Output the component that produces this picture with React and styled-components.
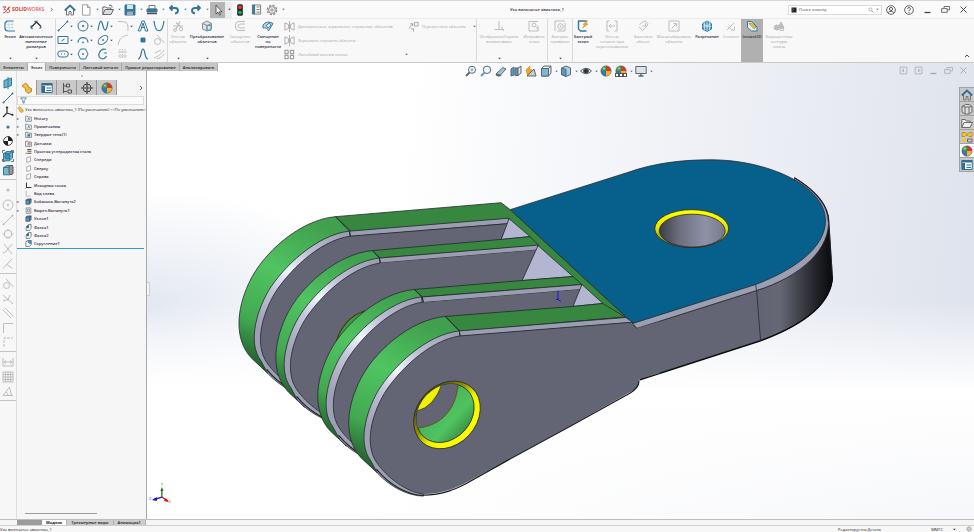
import React, {useState} from 'react';
import styled, {createGlobalStyle} from 'styled-components';

const Global = createGlobalStyle`
  * {
    box-sizing: border-box;
  }

  body {
    margin: 0;
    font-family: "Open Sans", "Noto Sans", sans-serif;
    font-size: 4px;
    line-height: 5px;
    color: #222;
    background: #f7f7f7;
  }

  button, input {
    font: inherit;
    color: inherit;
    border: 0;
    padding: 0;
    margin: 0;
    background: none;
  }

  svg {
    display: block;
    flex: none;
  }
`;

const Page = styled.div`
  height: 100vh;
  display: flex;
  flex-direction: column;
  overflow: hidden;
`;

const TitleBar = styled.header`
  height: 18px;
  flex: none;
  display: flex;
  align-items: center;
  border-top: 1px solid #d6d6d6;
  background: #fafafa;
`;

const Brand = styled.div`
  width: 62px;
  display: flex;
  align-items: center;
  padding-left: 2px;
  color: #d8322f;
  font-size: 5px;
  font-weight: 400;

  svg:first-child {
    margin-right: 1px;
  }

  b {
    font-weight: 700;
  }

  svg:last-child {
    margin-left: 5px;
    color: #444;
  }
`;

const Quick = styled.div`
  display: flex;
  align-items: center;
`;

const QuickButton = styled.button`
  height: 16px;
  width: ${(p) => (p.$wide ? 22 : 16)}px;
  display: flex;
  align-items: center;
  justify-content: ${(p) => (p.$wide ? 'space-between' : 'center')};
  padding: ${(p) => (p.$wide ? '0 1px 0 2px' : 0)};
  color: #33789b;
`;

const CursorButton = styled(QuickButton)`
  background: linear-gradient(90deg, #b5b5b5 15px, #ececec 15px);
  color: #333;
`;

const DocTitle = styled.h1`
  flex: 1;
  margin: 0;
  text-align: center;
  font-size: 4px;
  font-weight: 600;
  color: #3a2640;
`;

const Search = styled.label`
  width: 94px;
  height: 10px;
  display: flex;
  align-items: center;
  gap: 2px;
  padding: 0 2px;
  border: 1px solid #dcdcdc;
  background: #fff;
  color: #777;

  input {
    flex: 1;
    min-width: 0;
    outline: 0;
  }

  input::placeholder {
    color: #554050;
    opacity: 1;
  }
`;

const WindowButtons = styled.div`
  display: flex;
  padding-right: 2px;
  color: #444;

  button {
    width: 18px;
    display: flex;
    justify-content: center;
  }
`;

const Ribbon = styled.div`
  height: 45px;
  flex: none;
  display: flex;
  background: #f8f8f8;
  border-top: 1px solid #ececec;
  border-bottom: 1px solid #c9c9c9;
`;

const Group = styled.div`
  display: flex;
  padding-right: ${(p) => p.$end || 0}px;
  border-right: 1px solid ${(p) => (p.$last ? 'transparent' : '#d9d9d9')};
`;

const Tool = styled.button`
  width: ${(p) => p.$width}px;
  display: flex;
  flex-direction: column;
  align-items: center;
  padding: 1px 0 2px;
  white-space: pre;
  text-align: center;
  font-weight: ${(p) => (p.$off ? 400 : 600)};
  color: ${(p) => (p.$off ? '#a2a2a2' : '#2c2c3a')};
  background: ${(p) => (p.$active ? '#b0b0b0' : 'none')};

  & > svg:first-child {
    margin-bottom: 2px;
    color: ${(p) => (p.$off ? '#bdbdbd' : '#33789b')};
  }

  & > svg:nth-of-type(2) {
    margin-top: auto;
    color: #333;
  }
`;

const SketchTools = styled.div`
  display: grid;
  grid-template-columns: repeat(4, 20px) 16px 14px;
  grid-template-rows: repeat(3, 14px);
  padding: 0 0 0 1px;
`;

const SketchTool = styled.button`
  display: flex;
  align-items: center;
  gap: 1px;
  color: ${(p) => (p.$off ? '#bdbdbd' : '#33789b')};

  svg:nth-of-type(2) {
    color: #444;
  }
`;

const WideTools = styled.div`
  width: 194px;
  display: grid;
  grid-template-columns: 124px 1fr;
  grid-template-rows: repeat(3, 14px);
  padding: 0 0 0 2px;
`;

const WideTool = styled.button`
  display: flex;
  align-items: center;
  gap: 3px;
  white-space: nowrap;
  color: #a2a2a2;

  svg:nth-of-type(2) {
    margin-left: auto;
    color: #555;
  }
`;

const Collapse = styled.button`
  margin: auto 4px 3px auto;
`;

const Body = styled.main`
  flex: 1;
  min-height: 0;
  display: grid;
  grid-template-columns: 17px 129px 1fr;
  grid-template-rows: 8px 1fr;
`;

const CommandTabs = styled.nav`
  grid-area: 1 / 1 / 2 / 4;
  justify-self: start;
  z-index: 2;
  display: flex;
`;

const CommandTab = styled.button`
  height: 8px;
  padding: 0 3px;
  border-right: 1px solid #aaa;
  font-weight: 600;
  background: ${(p) => (p.$active ? '#f8f8f8' : '#c6c6c6')};
`;

const Rail = styled.aside`
  grid-area: 2 / 1;
  padding-top: 6px;
  background: #f7f7f7;
  border-right: 1px solid #dedede;
`;

const RailSection = styled.div`
  height: ${(p) => p.$height}px;
  margin-bottom: 3px;
  display: flex;
  flex-direction: column;
  align-items: center;
  justify-content: space-between;
  color: ${(p) => (p.$off ? '#bdbdbd' : '#33789b')};

  button {
    display: block;
  }
`;

const RailLine = styled.hr`
  height: 1px;
  margin: 0 0 4px;
  border: 0;
  background: #c4c4c4;
`;

const Panel = styled.section`
  grid-area: 2 / 2;
  min-width: 0;
  display: flex;
  flex-direction: column;
  background: #f6f6f6;
`;

const Grip = styled.div`
  height: 9px;
  display: flex;
  align-items: center;
  justify-content: center;
  color: #888;
`;

const PanelTabs = styled.div`
  height: 15px;
  display: flex;
  align-items: center;

  & > svg {
    margin: 0 2px 0 auto;
    color: #333;
  }
`;

const PanelTab = styled.button`
  width: 20px;
  height: 15px;
  display: flex;
  align-items: center;
  justify-content: center;
  border-right: 1px solid #999;
  background: ${(p) => (p.$active ? '#f6f6f6' : '#c9c9c9')};
  color: #444;
`;

const Filter = styled.label`
  height: 9px;
  margin: 1px 2px 0 0;
  display: flex;
  align-items: center;
  padding-left: 2px;
  border: 1px solid #dcdcdc;
  background: #fbfbfb;
  color: #2f6f92;

  input {
    flex: 1;
    min-width: 0;
    outline: 0;
  }
`;

const Root = styled.div`
  height: 9px;
  display: flex;
  align-items: center;
  gap: 1px;
  white-space: nowrap;
  overflow: hidden;
  color: #111;
`;

const Tree = styled.ul`
  height: 135px;
  margin: 0 2px 0 0;
  padding: 0;
  display: flex;
  flex-direction: column;
  justify-content: space-between;
  list-style: none;
  border-bottom: 1px solid #3f94c8;
`;

const Node = styled.li`
  height: 8px;
  display: flex;
  align-items: center;
  gap: 2px;
  font-weight: 600;
  color: #3a2a44;

  &::before {
    content: "${(p) => (p.$branch ? '▸' : '')}";
    width: 6px;
    color: #777;
  }
`;

const ScrollThumb = styled.div`
  width: 72px;
  height: 1px;
  margin: auto 0 5px 8px;
  background: #9c9c9c;
`;

const Viewport = styled.section`
  grid-area: 1 / 3 / 3 / 4;
  position: relative;
  overflow: hidden;
  border-left: 1px solid #a9a9a9;
  background:
    linear-gradient(180deg, rgba(255, 255, 255, 0) 52%, #fff 72%, rgba(255, 255, 255, .75) 100%),
    radial-gradient(ellipse 230px 120px at 0 54%, #e2e7f0, rgba(226, 231, 240, 0)),
    linear-gradient(97deg, #fff 30%, #dfe3ed 96%);
`;

const Model = styled.svg`
  position: absolute;
  inset: 0;
  width: 100%;
  height: 100%;
`;

const ViewTools = styled.div`
  position: absolute;
  top: 2px;
  left: 0;
  right: 0;
  display: flex;
  justify-content: center;
  padding-right: 4px;
  color: #5c6670;

  button {
    width: 15px;
    height: 12px;
    display: flex;
    align-items: center;
    justify-content: center;
  }

  button.menu {
    width: 20px;
    gap: 3px;
  }
`;

const DocButtons = styled.div`
  position: absolute;
  top: 3px;
  right: 3px;
  display: flex;
  color: #a5a8af;

  button {
    width: 15px;
    display: flex;
    justify-content: center;
  }
`;

const TaskPane = styled.div`
  position: absolute;
  top: 24px;
  right: 0;
  border: 1px solid #a2a2a2;
  border-right: 0;
`;

const TaskTab = styled.button`
  width: 14px;
  height: 14px;
  display: flex;
  align-items: center;
  justify-content: center;
  border-bottom: 1px solid #a2a2a2;
  background: ${(p) => (p.$active ? '#fff' : '#c8c8c8')};
  color: ${(p) => (p.$blue ? '#2f6f92' : '#6a6a6a')};

  &:last-child {
    height: 13px;
    border-bottom: 0;
  }
`;

const Handle = styled.button`
  position: absolute;
  left: 0;
  top: 48%;
  width: 3px;
  height: 14px;
  background: #f6f6f6;
  border: 1px solid #cfcfcf;
  border-left: 0;
`;

const SheetTabs = styled.nav`
  height: 6px;
  flex: none;
  display: flex;
  padding-left: 17px;
  border-top: 1px solid #bdbdbd;
  background: #f5f5f5;
`;

const SheetTab = styled.button`
  padding: 0 4px;
  border-right: 1px solid #b3b3b3;
  font-weight: ${(p) => (p.$active ? 700 : 600)};
  background: ${(p) => (p.$active ? '#fff' : '#cdcdcd')};
`;

const SheetArrows = styled.div`
  width: 25px;
  background: #9b9b9b;
`;

const Status = styled.footer`
  height: 7px;
  flex: none;
  display: flex;
  align-items: center;
  padding-right: 2px;
  border-top: 1px solid #cfcfcf;
  background: #f7f7f7;

  span:nth-child(2) {
    margin-left: auto;
    margin-right: 50px;
  }

  svg {
    margin-left: 10px;
  }
`;

const BLUE = '#4f9fc4';
const DARK = '#2f6f92';

const Ball = () => (
    <g stroke="none">
      <path d="M6 6V.8A5.2 5.2 0 0 1 11.2 6z" fill="#d9372c"/>
      <path d="M6 6h5.2A5.2 5.2 0 0 1 6 11.2z" fill="#f0b42c"/>
      <path d="M6 6v5.2A5.2 5.2 0 0 1 .8 6z" fill="#2f78c4"/>
      <path d="M6 6H.8A5.2 5.2 0 0 1 6 .8z" fill="#3aa047"/>
      <circle cx="6" cy="6" r="5.2" fill="none" stroke="#555" strokeWidth=".5"/>
      <ellipse cx="4" cy="3.6" rx="1.4" ry="1" fill="#fff" opacity=".5"/>
    </g>
);

const Cube = ({fill = BLUE}) => (
    <>
      <path d="M1.5 3.5 5 1.5h5.5v6.5L7.5 10.8h-6z" fill={fill}/>
      <path d="M1.5 3.5h6v7M7.5 3.5l3-2"/>
    </>
);

// Every glyph is drawn on a 12 x 12 grid
const glyphs = {
  ds: <path d="M1 2.5h4L3 5M2 6.5C7 4 7 10 1.5 10.5M6 7l4-3.5M11 3C7 2.5 7 5 9.5 6.5S9 11 6 9.5" strokeWidth="1.3"/>,
  next: <path d="m4 2 4 4-4 4" strokeWidth="1.6"/>,
  up: <path d="m2 8 4-4 4 4" strokeWidth="1.6"/>,
  caret: <path d="M1 3h10L6 9z" fill="currentColor" stroke="none"/>,
  home: <><path d="M2.5 6v5H5V7.5h2V11h2.5V6" stroke="#777"/><path d="M.8 6.5 6 1.5l5.2 5" strokeWidth="1.8"/></>,
  doc: <path d="M2.5.8h5L10 3.5v7.7H2.5zM7.5.8v2.700H10" fill="#fff" stroke="#8b8b8b" strokeWidth=".8"/>,
  open: <><path d="M.8 10.5V3h3l1 1h4v2" stroke="#666"/><path d="m.8 10.5 2.200-5h8.500L9 10.5z" fill="#ddd" stroke="#666"/><path d="M7 1.5c2-1 3 0 3 2" stroke={DARK}/></>,
  save: <><path d="M1 1h10v10H1z" fill="#33789b"/><path d="M3 1h6v4H3z" fill="#d7e6ee" stroke="none"/><path d="M3 7.5h6V11H3z" fill="#aab" stroke="none"/></>,
  print: <><path d="M3 1.5h6V5H3z" fill="#fff" stroke="#777"/><path d="M1 5h10v3H1z" fill="#33789b"/><path d="M1 9.5h10" stroke="#555" strokeWidth="1.5"/></>,
  undo: <path d="M2 4h5q3 0 3 2.5T7 9.5M4.5 1.500 2 4l2.500 2.500" strokeWidth="1.900"/>,
  redo: <path d="M10 4H5Q2 4 2 6.500t3 3M7.500 1.500 10 4 7.500 6.500" strokeWidth="1.900"/>,
  cursor: <path d="M4 1v9l2-1.800L7.500 11.200l1-.5L7.300 7.800H10z" fill="#eee" stroke="#333" strokeWidth=".7"/>,
  traffic: <><rect x="3.2" y=".3" width="5.6" height="11.4" rx="1.5" fill="#222" stroke="none"/><circle cx="6" cy="3.2" r="1.9" fill="#e3392e" stroke="none"/><circle cx="6" cy="8.5" r="1.9" fill="#1ba750" stroke="none"/></>,
  options: <><path d="M1.5 1h9v10h-9z" stroke="#777"/><path d="M1.5 1h3v10h-3z" fill="#33789b" stroke="none"/><path d="M6 3.200h3.500M6 6h3.500M6 8.800h3.500M2 4.500h2M2 7.500h2" stroke="#777"/></>,
  gear: <g stroke="#888"><circle cx="6" cy="6" r="4.6" strokeWidth="1.4" strokeDasharray="2.2 1.4"/><circle cx="6" cy="6" r="3.4"/><circle cx="6" cy="6" r="1.2"/></g>,
  prompt: <><path d="M1 1h10v10H1z" fill="#222" stroke="none"/><path d="m3 3 2 2-2 2" stroke="#eee"/></>,
  search: <><circle cx="5" cy="5" r="3.200"/><path d="m7.500 7.500 3.500 3.500" strokeWidth="1.4"/></>,
  user: <><circle cx="6" cy="6" r="5.2"/><circle cx="6" cy="4.8" r="1.9"/><path d="M2.5 9.500C3.500 7 8.500 7 9.500 9.500"/></>,
  help: <><circle cx="6" cy="6" r="5.2"/><path d="M4.300 4.700C4.300 2.500 7.700 2.500 7.700 4.600 7.700 6 6 5.800 6 7.500M6 8.500v1" strokeWidth="1.2"/></>,
  min: <path d="M2 10h8" strokeWidth="1.7"/>,
  restore: <path d="M4 4V2h7.500v4.500H8.500M.8 4.800h7.500v5H.8z"/>,
  close: <path d="m2 2 8 8M10 2l-8 8" strokeWidth="1.3"/>,
  sketch: <><path d="M9.5 1H3L1 3v5q0 3 3 3h7" strokeWidth="1.2"/><path d="M5 1v10M8 1v10M1 4.500h9M1 7.500h9" stroke="#b9d2df" strokeWidth=".6"/></>,
  dimension: <><path d="M1 7.500 6.500 2 11 6.500" strokeWidth="1.3" stroke="#333"/><path d="M2.500 9 1 7.500 1.200 5.500M4.200 1.500 7.500 1.200M9.500 8.500 11.500 7" stroke={DARK} strokeWidth="1.2"/></>,
  line: <><path d="M1 11 11 1"/><circle cx="1.5" cy="10.5" r=".6"/><circle cx="10.5" cy="1.5" r=".6"/></>,
  circle: <><circle cx="6" cy="6" r="5"/><circle cx="6" cy="6" r=".7" fill="currentColor"/></>,
  spline: <path d="M1 10.500C3-2 4.500 0 6 6s3.500 6 5-4.500" strokeWidth="1.2"/>,
  fillet: <path d="M1 1.500h4q6 0 6 6V11"/>,
  text: <path d="M1.500 11h2L6 3l2.500 8h2.500L7.200 1H5.200L1 11M4 7.500h4"/>,
  vcurve: <path d="M1 1C2.500 14 9.500 14 11 1" strokeWidth="1.2"/>,
  rect: <><path d="M1 2.500h10v7H1z"/><path d="m4.500 7 3-2M6 6h.1"/></>,
  arc: <><path d="M1 8.500C1 2 11 2 11 8.500" strokeWidth="1.2"/><circle cx="6" cy="8.5" r=".6"/></>,
  ellipse: <><ellipse cx="6" cy="6" rx="5.6" ry="3.4" transform="rotate(-40 6 6)"/><circle cx="6" cy="6" r=".6"/></>,
  bigArc: <path d="M1 11C2 5 5 2 11 1"/>,
  point: <path d="M4 4h4v4H4z" fill="currentColor"/>,
  tangent: <><circle cx="4.5" cy="7.5" r="3"/><path d="m4 1 7.500 8"/></>,
  slot: <><rect x=".7" y="3" width="10.6" height="6" rx="3"/><path d="M4 6h4" strokeDasharray="1 2"/></>,
  polygon: <><path d="M3.500 1h5L11 6 8.500 11h-5L1 6z"/><circle cx="6" cy="6" r=".6"/></>,
  ring: <><circle cx="6" cy="6" r="3.8"/><path d="M6 .8v2.400M6 8.800v2.400M.8 6h2.400M8.800 6h2.400"/></>,
  openArc: <path d="M9 1.500C3-.5-.5 8 4 10.500 6 11.500 8.500 10.500 9.500 8M7 5h3" strokeWidth="1.2"/>,
  mesh: <path d="M3 1v10M8 1v10M1 4h9M1 8h9M5.500 1v10" strokeDasharray="1.5 1"/>,
  bump: <path d="M1 11C5 11 3.500 1 6 1s1 10 5 10" strokeWidth="1.2"/>,
  pencil: <path d="M1 10c4-1 8-5 10-8M2 5l6-3M4 11c3-1 5-2 7-5"/>,
  cut: <><path d="M1 6h10M4 2.500 8 6M8 1.500 4 9" strokeWidth="1.2"/><circle cx="3" cy="10" r="1.4"/><circle cx="9" cy="9" r="1.7"/></>,
  convert: <><path d="M1.500 3.500 6 1l4.500 2.500v5.500L6 11 1.500 9z" fill="#e4e4e4" stroke="#888"/><path d="M1.500 3.500 6 5.500l4.500-2M6 5.500V11" stroke="#888"/><path d="M6 5.500h4v4.800H6z" stroke={BLUE}/></>,
  offset: <path d="M11 1.500H5Q1.500 1.500 1.500 5v2q0 3.500 3.500 3.500h6M11 4H7Q4 4 4 6t3 2h4"/>,
  surface: <><path d="M1 5Q5 0 11 3.500L6.500 11Q5 7 1 8z" fill="#bcd9e8"/><path d="M4 5.500 7.500 3 9 5.500 6 8z" fill="#fff"/></>,
  mirror: <path d="M1 2v8l4-2V4zM11 2v8L7 8V4zM6 0v12" strokeWidth=".9"/>,
  pattern: <path d="M1 1.500h3.500V5H1zM1 7h3.500v3.500H1zM7 1.500h3.500V5H7zM7 7h3.500v3.500H7z" strokeWidth="1.3"/>,
  move: <path d="M1 8 5 3M2.500 3H5v2.500M7 1.500h4v4H7zM3 8.500h3v3"/>,
  relations: <path d="M6 1v8M1.500 9.500h9M8 6.500l3 4.500"/>,
  repair: <><path d="M10 5.500V11H1V1.500h9"/><circle cx="6" cy="5" r="2"/><path d="m7.500 6.500 3 3"/></>,
  snap: <><path d="M1 11V1h10M3 11h8V3"/><circle cx="6.5" cy="6.5" r="2.8"/><circle cx="6.5" cy="6.5" r=".6"/></>,
  rapid: <><path d="M9.500 1H1.500v8l2 2h6" strokeWidth="1.4"/><path d="M10.500.5 6 4.500h2L5.500 8 11 4H9z" fill="#f7a823" stroke="#cf7c10" strokeWidth=".5"/></>,
  trim: <path d="M3.500 1H1v10h2.500M8.500 1H11v10H8.500M3 6h6M5 4 3 6l2 2"/>,
  replace: <path d="M2 7 5.500 10.500 10 6q2-3-1-4.500T4.500 3l-2 1.500M5.500 6h3M8.500 6V3"/>,
  scale: <path d="M1 1h10v10H1zM3.500 8.500 8 4M5.500 3.500h3v3"/>,
  split: <><path d="M1.500 3.500 6 1l4.500 2.500v5.500L6 11.500 1.500 9z" fill={BLUE}/><path d="M1.500 3.500 6 6l4.500-2.500M6 1v10.500M1.500 6.200l9 .1M3.500 2.300v7.900M8.500 2.300v7.900" stroke="#dff0f7" strokeWidth=".7"/></>,
  segment: <path d="M2 10 9 3M3 6.500l3 3M6 10h4M9.500 6.500v3"/>,
  instant: <><path d="M1.500 1.500v6l4 3.500H11V7L5.500 1.500z" fill="#e9eff2"/><path d="M3 3.500 5 3l5 4-2 1.800z" fill="#f3c83a" stroke="#8a6c10" strokeWidth=".6"/></>,
  shaded: <><path d="M8 2 11 7.500H5z" fill="currentColor"/><circle cx="3.8" cy="7.5" r="2.5" fill="currentColor"/><path d="M7 8.500h3.500v2H7z"/></>,
  plane: <><path d="M2 3.500 9.500 1v7.500L2 11z" fill="#6cb3d3"/><path d="M6 0v12"/></>,
  axes: <path d="M5 1v6l6 2M5 7l-4 4M4 2l1-1 1 1M10 7.800 11 9l-1.500.5" stroke="#333" strokeWidth="1.2"/>,
  dot: <circle cx="6" cy="6" r="1.6" fill="currentColor" stroke="none"/>,
  mass: <><circle cx="6" cy="6" r="4.4" fill="#fff" stroke="#222" strokeWidth=".8"/><path d="M6 1.600A4.400 4.400 0 0 1 10.400 6H6zM6 10.400A4.400 4.400 0 0 1 1.600 6H6z" fill="#222" stroke="none"/></>,
  body: <Cube/>,
  boundBody: <><Cube fill="#6fb2d0"/><circle cx="5.500" cy="6.500" r="2.600" fill="#3f8db3"/><path d="M.5 3V.5H3M9 .5h2.500V3M.5 9v2.500H3M9 11.500h2.500V9" stroke="#777"/></>,
  clamp: <><Cube fill="#79b7d2"/><path d="M7 2.500Q9.500 0 11 2.500v7Q9 12 7 9.500z" fill="#999" stroke="#555"/></>,
  cross: <path d="m2 1 8 10M10.500 1.500Q7 3 6 6t-5 4"/>,
  perp: <path d="M1 10.500 10 1M5 6.500l5.500 4"/>,
  angleCut: <path d="M1 2l10 9M1 8l6-2M8 2 5.500 7.500"/>,
  parallel: <path d="m1 3 8 8M3.500 1.500l8 8"/>,
  corner: <path d="M1.500 11V1.500H11"/>,
  ortho: <path d="M2 11V2h9" strokeDasharray="3 1"/>,
  width: <path d="M1 2v8M11 2v8M2 6h8M4 4.500 2 6l2 1.500M8 4.500 10 6 8 7.500M1 10h10"/>,
  grid: <path d="M1 1h10v10H1zM1 3.500h10M1 6h10M1 8.500h10M3.500 1v10M6 1v10M8.500 1v10"/>,
  angle: <path d="M1 10.500h10M1 10.500 7.500 2l2 8.500M4 7q2 1 2 3.500"/>,
  part: <><path d="m1 4 3.500-3 2.500 2v2l3.500 1.500v3L7 11.500 4.500 9V6.500z" fill="#f5c33b" stroke="#a87a13" strokeWidth=".8"/><circle cx="8" cy="8.2" r="1" fill="#fff" stroke="#a87a13" strokeWidth=".5"/></>,
  props: <><path d="M.8 1.500h10.400v9H.8z" fill="#fff" stroke={DARK}/><path d="M.8 1.500h10.400v2H.8zM1 4h3v6H1z" fill={DARK} stroke="none"/><path d="M5.500 6H10M5.500 8.500H10" stroke={DARK}/></>,
  config: <path d="M2.500 1v10M2.500 4H6M2.500 9.500H6M5.500 2h3v3h-3zM7 8h3.500v3H7z" stroke="#555"/>,
  target: <><circle cx="6" cy="6" r="4"/><path d="M6 0v12M0 6h12" strokeWidth="1.2"/></>,
  ball: <Ball/>,
  funnel: <path d="M1 1.500h10L7 6.500V11L5 9.500v-3z" fill="#fff" strokeWidth="1.3"/>,
  folder: <><path d="M1 2h3l1 1.500h6V11H1z" fill="#e7eef2" stroke="#666"/><path d="M4.500 9.500 6.500 5l2 4.500" stroke={DARK}/></>,
  bodies: <><path d="M1 2h3l1 1.500h6V11H1z" fill="#dfe6ea" stroke="#555"/><path d="M4.500 5.500h4v4h-4z" fill={DARK} stroke="none"/></>,
  sensor: <><path d="M1 2h3l1 1.500h6V11H1z" fill="#e7eef2" stroke="#555"/><circle cx="7" cy="7" r="2" stroke="#a33"/></>,
  material: <><path d="M4 2.500h7M4 5.500h7M4 9h7" stroke="#333" strokeWidth="1.500"/><circle cx="2" cy="9" r="1.500" fill="#e6a52a" stroke="none"/></>,
  datum: <path d="M3 3 9.500 1v8L3 11z" fill="#fff" stroke="#777"/>,
  origin: <path d="M2.500 1v8.500H11M1 11l1.500-1.500" stroke="#222" strokeWidth="1.6"/>,
  view: <path d="M2 1v9.500h8" stroke="#999"/>,
  cutout: <><path d="M2 1.500h8V11H2z" fill="#e7eef2" stroke="#666"/><path d="M4.500 4h3v4.500h-3z" fill="#fff" stroke={DARK}/></>,
  chamfer: <><path d="M2 5 6 1h4.500v6L8 11H2z" fill="#fff" stroke="#333"/><path d="M2 5 6 1l1.500 4L5 8z" fill={DARK} stroke="none"/></>,
  round: <><path d="M1.500 3 5 1h5.500v6.500L8 11H1.500z" fill="#fff" stroke="#333"/><path d="M5 1h5.500v5Q5 7 5 1z" fill={BLUE} stroke={DARK}/></>,
  zoomFit: <><circle cx="7" cy="4.8" r="3.5" fill="#fff"/><path d="M4.500 7.500 1 11" strokeWidth="1.8"/><path d="M5.500 4.800h3M7 3.300v3" stroke={BLUE}/></>,
  zoomArea: <><circle cx="7" cy="4.8" r="3.7" fill="#f3f9fc"/><path d="M4.500 7.500 1 11" strokeWidth="1.8" stroke={BLUE}/></>,
  rotate: <><path d="M1 9 8 2.500l3 1.500L5.500 10z" fill="#9dc6da"/><path d="M1 9q2 3 5 1" strokeWidth="1.4"/></>,
  section: <><path d="M1 4 4 2v8l-3 1zM5 3h3v7.500H5z" fill={BLUE}/><path d="m8 3 3-2v7l-3 2.500z" fill="#e4e4e4"/></>,
  magic: <><path d="M2 11 9 4l2 7z" fill="#ccc"/><path d="M1 5 5 1 4.500 4 7 5 2.500 10z" fill="#f5a51f" stroke="#b56d10" strokeWidth=".5"/></>,
  viewCube: <><path d="M1.500 3.500 4 1h7v7l-2.500 3h-7z" fill="#e8eef2"/><path d="M1.500 3.500h7v7.500h-7z" fill="#7db9d4"/><path d="m8.500 3.500 2.500-2.500"/></>,
  shadedCube: <><path d="M1.500 3 6 1l4.500 2v6.500L6 11.500 1.500 9.500z" fill="#a9cfe0"/><path d="M1.500 3 6 4.500v7L1.500 9.500z" fill={BLUE}/></>,
  eye: <><path d="M.5 6Q6 .5 11.500 6 6 11.500.5 6z" fill="#e8e8e8"/><circle cx="6" cy="6" r="2.5" fill="#333"/></>,
  scene: <><Ball/><path d="M0 8h12v4H0z" fill="#555" stroke="none"/><path d="M1 9h2v2H1zM5 9h2v2H5zM9 9h2v2H9z" fill="#fff" stroke="none"/></>,
  monitor: <><path d="M.8 1.500h10.400v7H.8z" fill="#dfe3e8"/><path d="M6 8.500v2M3.500 11h5" strokeWidth="1.4"/></>,
  paneLeft: <path d="M1.500 1.500h9v9h-9zM6 4 4 6l2 2z"/>,
  paneRight: <path d="M1.500 1.500h9v9h-9zM6 4l2 2-2 2z"/>,
  library: <><path d="M1 3.500 4.500 1.500h4l2.500 2V9L8 11H4L1 9z" fill="#ddd"/><path d="M4 4v7M8 4v7M1 3.500 4 4h4l3-.5"/></>,
  taskFolder: <path d="M.8 10.500V2.500h3.500l1 1.500h4v1.500M.8 10.500l2.200-5h8.500L9 10.500z" fill="#eee"/>,
  palette: <><path d="M1 1.500h3l1 1.500h2l1-1.500h3v4H8L7 4.500H5L4 5.500H1z" fill="#f0c52e" stroke="#9a7a10" strokeWidth=".6"/><path d="M1 8h4v3H1z" fill="#f0c52e" stroke="none"/><path d="M6.500 8H11v3H6.500z"/></>,
};

const Icon = ({name, size = 11}) => (
    <svg width={size} height={size} viewBox="0 0 12 12" fill="none" stroke="currentColor" strokeLinejoin="round" aria-hidden="true">
      {glyphs[name]}
    </svg>
);

const quick = [
  {icon: 'home', label: 'Домой'},
  {icon: 'doc', label: 'Создать', menu: true},
  {icon: 'open', label: 'Открыть', menu: true},
  {icon: 'save', label: 'Сохранить', menu: true},
  {icon: 'print', label: 'Печать', menu: true},
  {icon: 'undo', label: 'Отменить', menu: true},
  {icon: 'redo', label: 'Повторить', menu: true},
];

const sketchTools = [
  ['line', 1], ['circle', 1], ['spline', 1], ['fillet', 1, 1], ['text'], ['vcurve'],
  ['rect', 1], ['arc', 1], ['ellipse', 1], ['bigArc', 0, 1], ['point'], ['tangent', 0, 1],
  ['slot', 1], ['polygon'], ['openArc'], ['mesh', 0, 1], ['bump'], ['pencil', 0, 1],
];

const groups = [
  {
    tools: [
      {icon: 'cut', label: 'Отсечь\nобъекты', width: 20, off: true, menu: true},
      {icon: 'convert', label: 'Преобразование\nобъектов', width: 38, menu: true},
      {icon: 'offset', label: 'Смещение\nобъектов', width: 28, off: true},
      {icon: 'surface', label: 'Смещение\nпо\nповерхности', width: 28},
    ],
    wide: true,
  },
  {
    tools: [
      {icon: 'relations', label: 'Отобразить/Скрыть\nвзаимосвязи', width: 44, off: true, menu: true},
      {icon: 'repair', label: 'Исправить\nэскиз', width: 26, off: true},
    ],
  },
  {tools: [{icon: 'snap', label: 'Быстрые\nпривязки', width: 24, off: true, menu: true}]},
  {
    last: true,
    tools: [
      {icon: 'rapid', label: 'Быстрый\nэскиз', width: 20},
      {icon: 'trim', label: 'Отсечь\nсегмент при\nперетаскивании', width: 38, off: true},
      {icon: 'replace', label: 'Заменить\nобъект', width: 24, off: true},
      {icon: 'scale', label: 'Масштабировать\nобъекты', width: 38, off: true},
      {icon: 'split', label: 'Разрезание', width: 28},
      {icon: 'segment', label: 'Сегмент', width: 20, off: true},
      {icon: 'instant', label: 'Instant2D', width: 22, active: true},
      {icon: 'shaded', label: 'Закрашенные\nконтуры\nэскиза', width: 32, off: true},
    ],
  },
];

const commandTabs = ['Элементы', 'Эскиз', 'Поверхности', 'Листовой металл', 'Прямое редактирование', 'Анализировать'];

const railSections = [
  {height: 99, icons: ['plane', 'line', 'axes', 'dot', 'mass', 'boundBody', 'clamp']},
  {height: 86, off: true, icons: ['dot', 'circle', 'line', 'ring', 'cross', 'perp']},
  {height: 70, off: true, icons: ['tangent', 'angleCut', 'parallel', 'corner', 'ortho']},
  {height: 41, off: true, icons: ['width', 'grid', 'angle']},
];

const tree = [
  {icon: 'folder', name: 'History', branch: true},
  {icon: 'folder', name: 'Примечания', branch: true},
  {icon: 'bodies', name: 'Твердые тела(1)', branch: true},
  {icon: 'sensor', name: 'Датчики'},
  {icon: 'material', name: 'Простая углеродистая сталь'},
  {icon: 'datum', name: 'Спереди'},
  {icon: 'datum', name: 'Сверху'},
  {icon: 'datum', name: 'Справа'},
  {icon: 'origin', name: 'Исходная точка'},
  {icon: 'view', name: 'Вид слева'},
  {icon: 'body', name: 'Бобышка-Вытянуть2', branch: true},
  {icon: 'cutout', name: 'Вырез-Вытянуть1', branch: true},
  {icon: 'body', name: 'Уклон1'},
  {icon: 'chamfer', name: 'Фаска1'},
  {icon: 'chamfer', name: 'Фаска2'},
  {icon: 'round', name: 'Скругление1'},
];

const viewTools = [
  ['zoomFit'], ['zoomArea'], ['rotate'], ['section'], ['magic'], ['viewCube', 1],
  ['shadedCube', 1], ['eye', 1], ['ball'], ['scene', 1], ['monitor', 1],
];

function RibbonTool({icon, label, width, off, active, menu}) {
  return (
      <Tool $width={width} $off={off} $active={active}>
        <Icon name={icon} size={12}/>
        {label}
        {menu && <Icon name="caret" size={3}/>}
      </Tool>
  );
}

// Rounded end of a lug: outer skin, chamfer band and flat face
function LugSkin({x, y}) {
  return (
      <path
          transform={`translate(${x} ${y})`}
          d="M335 217C300 220 262 253 248 284 236 310 233 340 251 359L267 374 275 365 300 300 350 232z"
          fill="url(#skin)"
      />
  );
}

function LugBand({x, y}) {
  return (
      <g transform={`translate(${x} ${y})`}>
        <path
            d="M349 231.500C316 235 282 268 268 291 254 315 248 345 260 361L267 374C280 388 298 397 313 397L330 320 350 237z"
            fill="url(#band)"
        />
        <path d="M266 370C280 387 298 396 313 396.500" stroke="#222" strokeWidth="1.200" fill="none"/>
      </g>
  );
}

const FACE = 'C318 241 287 273 274 294 261 316 254 345 266 363 276 378 296 393 313 395';

function Bracket() {
  return (
      <Model viewBox="147 63 827 457" role="img" aria-label="Вилка, трёхмерная модель">
        <defs>
          <linearGradient id="skin" gradientUnits="userSpaceOnUse" x1="250" y1="372" x2="310" y2="222">
            <stop offset="0" stopColor="#1c4f26"/>
            <stop offset=".3" stopColor="#43a951"/>
            <stop offset=".65" stopColor="#50c461"/>
            <stop offset="1" stopColor="#40a04d"/>
          </linearGradient>
          <linearGradient id="band" gradientUnits="userSpaceOnUse" x1="255" y1="325" x2="345" y2="235">
            <stop offset="0" stopColor="#9d9fb4"/>
            <stop offset=".3" stopColor="#c3c7dc"/>
            <stop offset=".48" stopColor="#f2f6ff"/>
            <stop offset=".7" stopColor="#bbbfd4"/>
            <stop offset="1" stopColor="#9b9db2"/>
          </linearGradient>
          <linearGradient id="side" gradientUnits="userSpaceOnUse" x1="757" y1="0" x2="833" y2="0">
            <stop offset="0" stopColor="#616373"/>
            <stop offset=".3" stopColor="#666876"/>
            <stop offset=".75" stopColor="#27282d"/>
            <stop offset="1" stopColor="#08090a"/>
          </linearGradient>
          <linearGradient id="bore">
            <stop offset="0" stopColor="#3b3c45"/>
            <stop offset=".3" stopColor="#6c6e7e"/>
            <stop offset=".7" stopColor="#8f91a7"/>
            <stop offset="1" stopColor="#77798b"/>
          </linearGradient>
          <linearGradient id="rim" x2="0" y2="1">
            <stop offset="0" stopColor="#ffff00"/>
            <stop offset=".5" stopColor="#e5e500"/>
            <stop offset="1" stopColor="#6a6a00"/>
          </linearGradient>
          <linearGradient id="frontRim" x2="0" y2="1">
            <stop offset="0" stopColor="#4e4a00"/>
            <stop offset=".35" stopColor="#8f8c00"/>
            <stop offset=".6" stopColor="#f2f200"/>
            <stop offset="1" stopColor="#ffff00"/>
          </linearGradient>
          <linearGradient id="frontSkin" x2="0" y2="1">
            <stop offset="0" stopColor="#2c7437"/>
            <stop offset=".4" stopColor="#4ab95a"/>
            <stop offset=".7" stopColor="#50c461"/>
            <stop offset="1" stopColor="#3b9547"/>
          </linearGradient>
          <clipPath id="frontBore">
            <ellipse cx="445" cy="414" rx="32" ry="26" transform="rotate(-47 445 414)"/>
          </clipPath>
        </defs>

        <g stroke="#26282c" strokeWidth=".8" strokeLinejoin="round">
          <path d="M637 329 757 291C800 277 829 252 829 216L833 277C832 306 800 327 761 341L640 380 600 360z" fill="#636575"/>
          <path d="M757 291C800 277 829 252 829 216L833 277C832 306 800 327 761 341z" fill="url(#side)"/>
          <path d="M640 380.500 761 341.500C800 327 832 306 833 277" fill="none" stroke="#08090b" strokeWidth="1.400"/>
          <path d="M633 324 637 329 757 291C802 277 832 249 829 218 828 206 818 192 795 178L790 230z" fill="#9c9eb2"/>
          <path d="M829 222C829 207 818 192 795 178" fill="none" stroke="#222" strokeWidth="1.200"/>
          <path d="M510 210 627 173C655 163 683 160 711 160 768 160 826 186 826 221 826 249 793 271 756 285L633 324z" fill="#07608b"/>
          <path d="M756 285 757 291"/>
          <ellipse cx="692" cy="229" rx="37" ry="19" fill="url(#rim)"/>
          <ellipse cx="692.500" cy="231" rx="33" ry="16.500" fill="url(#bore)"/>

          <path d="M335 217 501 203 510 210 633 324 626 319 459 332z" fill="#378740"/>
          <LugSkin x={0} y={0}/>
          <LugBand x={0} y={0}/>
          <path d="M349 231.500 509 218.500 508 224 350 237z" fill="#9b9db2"/>
          <path d={`M508 224 350 236.500${FACE}L400 300 501 240z`} fill="#636575"/>
          <path d="M509 219 530 237 501 240z" fill="#b3b6d0"/>

          <path d="M372 251 480 241.700 530 237 539 246 379 258.500z" fill="#378740"/>
          <LugSkin x={37} y={34}/>
          <LugBand x={30} y={27}/>
          <path d="M379 258.500 538 245.500 537 250.500 380 263.500z" fill="#9b9db2"/>
          <path d={`M478 256 350 236.500${FACE}L400 330 470 270z`} transform="translate(30 27)" fill="#636575" stroke="none"/>
          <path d="M380 263.500 537 250.500 522 281 414 290 350 350z" fill="#636575" stroke="none"/>
          <path d={`M350 236.500${FACE}`} transform="translate(30 27)" fill="none"/>
          <path d="M538 246 573 277 522 281z" fill="#b3b6d0"/>
          <path d="M336 342C339 330 349 316 364 311.500L352 328z" fill="#3c9b4a" stroke="#4a3a08" strokeWidth="1.200"/>

          <path d="M414 290 522 281 573 277 582 285 422 297.500z" fill="#378740"/>
          <LugSkin x={79} y={73}/>
          <LugBand x={72} y={66}/>
          <path d="M422 297.500 582 285 581 290 423 303z" fill="#9b9db2"/>
          <path d={`M350 236.500${FACE}L400 330z`} transform="translate(73 66)" fill="#636575" stroke="none"/>
          <path d="M423 303 581 290 573 307 445 317 400 370z" fill="#636575" stroke="none"/>
          <path d={`M350 236.500${FACE}`} transform="translate(73 66)" fill="none"/>
          <path d="M582 285 603 304 573 307z" fill="#b3b6d0"/>

          <path d="M445 317 573 307 603 304 625 317.500 459 332z" fill="#378740"/>
          <LugSkin x={110} y={100}/>
          <LugBand x={110} y={100}/>
          <path d="M459 331.500 626 318 633 323 460 337z" fill="#9b9db2"/>
          <path
              d="M460 336.500C428 341 397 373 384 394 371 416 364 445 376 463 386 478 406 493 423 495 445 495 459 487 467 483L507 461 573 425 630 393Q640 388 639 380L660 374V322L637 329 630 323z"
              fill="#636575" stroke="none"
          />
          <path d="M637 329 630 323 460 336.500C428 341 397 373 384 394 371 416 364 445 376 463 386 478 406 493 423 495" fill="none"/>
          <path d="M423 496C445 496 459 488 467 484L507 461.500 573 425.500 630 394Q640 388 639 381" fill="none" stroke="#15161a" strokeWidth="1.200"/>
          <path d="M335 217 349 231.500 350 237M372 251 379 258.500 380 263.500M414 290 422 297.500 423 303M445 317 459 331.500 460 337" fill="none"/>

          <ellipse cx="446.700" cy="415.700" rx="37" ry="30" transform="rotate(-47 446.700 415.700)" fill="url(#frontRim)"/>
          <ellipse cx="445" cy="414" rx="32" ry="26" transform="rotate(-47 445 414)" fill="url(#frontSkin)"/>
          <g clipPath="url(#frontBore)">
            <path d="M458 370C461 402 446 430 410 429L400 370z" fill="#636575" stroke="#5f4a12"/>
            <path d="M442 384Q422 389 416 412 434 408 442 384z" fill="#f2f200"/>
          </g>
        </g>

        <path d="M558 291V300L561 302M556 300h3" stroke="#1616e8" strokeWidth="1" fill="none"/>
        <g strokeWidth="1.300">
          <path d="M161 498V490" stroke="#127a12"/>
          <path d="M159.500 492 161 488 162.500 492z" fill="#127a12"/>
          <path d="M161 498 153 500.500" stroke="#1313c8"/>
          <path d="M156 498 151 501 156 502z" fill="#1313c8"/>
          <path d="M161 498 167 502" stroke="#d01414"/>
          <path d="m163 502 5 1-3-4z" fill="#d01414"/>
        </g>
        <g fontSize="4">
          <text x="160" y="487" fill="#3b9a3b">Y</text>
          <text x="148" y="501" fill="#4444dd">Z</text>
          <text x="168" y="504" fill="#dd4444">X</text>
        </g>
      </Model>
  );
}

export default function App() {
  const [tab, setTab] = useState('Эскиз');
  const [sheet, setSheet] = useState('Модель');

  return (
      <Page>
        <Global/>
        <TitleBar>
          <Brand>
            <Icon name="ds" size={9}/>
            <b>SOLID</b>WORKS
            <Icon name="next" size={5}/>
          </Brand>
          <Quick>
            {quick.map(q => (
                <QuickButton key={q.icon} $wide={q.menu} aria-label={q.label}>
                  <Icon name={q.icon} size={12}/>
                  {q.menu && <Icon name="caret" size={3}/>}
                </QuickButton>
            ))}
            <CursorButton $wide aria-label="Выбрать">
              <Icon name="cursor" size={12}/>
              <Icon name="caret" size={3}/>
            </CursorButton>
            <QuickButton aria-label="Перестроить"><Icon name="traffic" size={12}/></QuickButton>
            <QuickButton aria-label="Свойства"><Icon name="options" size={11}/></QuickButton>
            <QuickButton $wide aria-label="Параметры">
              <Icon name="gear" size={12}/>
              <Icon name="caret" size={3}/>
            </QuickButton>
          </Quick>
          <DocTitle>Ухо вильчатое авиатика_1</DocTitle>
          <Search>
            <Icon name="prompt" size={6}/>
            <input placeholder="Поиск команд" aria-label="Поиск команд"/>
            <Icon name="search" size={6}/>
            <Icon name="caret" size={3}/>
          </Search>
          <WindowButtons>
            <button aria-label="Вход"><Icon name="user" size={10}/></button>
            <button aria-label="Справка"><Icon name="help" size={10}/></button>
            <button aria-label="Свернуть"><Icon name="min" size={9}/></button>
            <button aria-label="Восстановить"><Icon name="restore" size={9}/></button>
            <button aria-label="Закрыть"><Icon name="close" size={9}/></button>
          </WindowButtons>
        </TitleBar>

        <Ribbon>
          <Group $end={3}>
            <RibbonTool icon="sketch" label="Эскиз" width={20} menu/>
            <RibbonTool icon="dimension" label={'Автоматическое\nнанесение\nразмеров'} width={32} menu/>
          </Group>
          <Group>
            <SketchTools>
              {sketchTools.map(([name, menu, off]) => (
                  <SketchTool key={name} $off={off} aria-label={name}>
                    <Icon name={name} size={12}/>
                    {menu ? <Icon name="caret" size={3}/> : null}
                  </SketchTool>
              ))}
            </SketchTools>
          </Group>
          {groups.map((g, i) => (
              <Group key={i} $last={g.last}>
                {g.tools.map(t => <RibbonTool key={t.icon} {...t}/>)}
                {g.wide && (
                    <WideTools>
                      <WideTool><Icon name="mirror"/>Динамическое зеркальное отражение объектов</WideTool>
                      <WideTool><Icon name="move"/>Переместить объекты<Icon name="caret" size={3}/></WideTool>
                      <WideTool><Icon name="mirror"/>Зеркально отразить объекты</WideTool>
                      <span/>
                      <WideTool><Icon name="pattern"/>Линейный массив эскиза<Icon name="caret" size={3}/></WideTool>
                    </WideTools>
                )}
              </Group>
          ))}
          <Collapse aria-label="Свернуть ленту"><Icon name="up" size={6}/></Collapse>
        </Ribbon>

        <Body>
          <CommandTabs>
            {commandTabs.map(t => (
                <CommandTab key={t} $active={t === tab} onClick={() => setTab(t)}>{t}</CommandTab>
            ))}
          </CommandTabs>

          <Rail>
            {railSections.map(s => (
                <React.Fragment key={s.height}>
                  <RailSection $height={s.height} $off={s.off}>
                    {s.icons.map(name => (
                        <button key={name} aria-label={name}><Icon name={name} size={12}/></button>
                    ))}
                  </RailSection>
                  <RailLine/>
                </React.Fragment>
            ))}
          </Rail>

          <Panel>
            <Grip><Icon name="dot" size={6}/></Grip>
            <PanelTabs>
              {['part', 'props', 'config', 'target', 'ball'].map((name, i) => (
                  <PanelTab key={name} $active={i === 0} aria-label={name}><Icon name={name} size={12}/></PanelTab>
              ))}
              <Icon name="next" size={6}/>
            </PanelTabs>
            <Filter>
              <Icon name="funnel" size={7}/>
              <input aria-label="Фильтр"/>
            </Filter>
            <Root><Icon name="part" size={7}/>Ухо вильчатое авиатика_1 (По умолчанию) &lt;&lt;По умолчанию&gt;</Root>
            <Tree>
              {tree.map(n => (
                  <Node key={n.name} $branch={n.branch}>
                    <Icon name={n.icon} size={7}/>
                    {n.name}
                  </Node>
              ))}
            </Tree>
            <ScrollThumb/>
          </Panel>

          <Viewport>
            <Bracket/>
            <ViewTools>
              {viewTools.map(([name, menu]) => (
                  <button key={name} className={menu ? 'menu' : undefined} aria-label={name}>
                    <Icon name={name} size={12}/>
                    {menu ? <Icon name="caret" size={3}/> : null}
                  </button>
              ))}
            </ViewTools>
            <DocButtons>
              {['paneLeft', 'paneRight', 'min', 'restore', 'close'].map(name => (
                  <button key={name} aria-label={name}><Icon name={name} size={9}/></button>
              ))}
            </DocButtons>
            <TaskPane>
              {['home', 'library', 'taskFolder', 'palette', 'ball', 'props'].map(name => (
                  <TaskTab key={name} $active={name === 'ball'} $blue={name === 'home'} aria-label={name}>
                    <Icon name={name} size={12}/>
                  </TaskTab>
              ))}
            </TaskPane>
            <Handle aria-label="Скрыть дерево"/>
          </Viewport>
        </Body>

        <SheetTabs>
          <SheetArrows/>
          {['Модель', 'Трехмерные виды', 'Анимация1'].map(s => (
              <SheetTab key={s} $active={s === sheet} onClick={() => setSheet(s)}>{s}</SheetTab>
          ))}
        </SheetTabs>
        <Status>
          <span>Ухо вильчатое авиатика_1</span>
          <span>Редактируется Деталь</span>
          <span>ММГС</span>
          <Icon name="caret" size={3}/>
          <Icon name="gear" size={6}/>
        </Status>
      </Page>
  );
}
